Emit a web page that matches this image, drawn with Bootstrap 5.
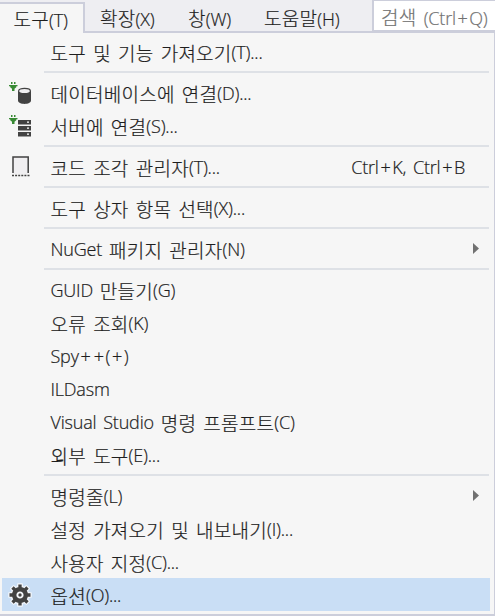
<!DOCTYPE html>
<html lang="ko">
<head>
<meta charset="utf-8">
<meta name="viewport" content="width=device-width, initial-scale=1">
<title>도구 메뉴</title>
<link href="https://cdn.jsdelivr.net/npm/bootstrap@5.3.0/dist/css/bootstrap.min.css" rel="stylesheet">
<style>
body{width:497px;height:616px;overflow:hidden;background:#fff;color:#1e1e1e;font-family:"Noto Sans CJK KR",sans-serif;font-size:19px;font-weight:300;line-height:33px;white-space:nowrap;-webkit-text-stroke:.22px}
.shell{width:495px}
.topbar{height:33px;background:#eeeef2;border-bottom:2px solid #cccedb}
.tab-open{width:85px;height:31px;margin-top:2px;background:#f6f6f6;border:solid #cccedb;border-width:2px 2px 0 0;padding-left:13.5px;line-height:29px}
.topbar .tab-open{height:31px}
.top-item{padding-top:2px;padding-left:15px;line-height:31px}
.top-item.extend{width:88px}
.top-item.windows{width:76px}
.top-item.help{width:123px}
.search-box{width:123px;height:31px;background:#fff;border:solid #cccedb;border-width:1px 0 1px 2px;color:#717171;padding-left:7px;line-height:31px}
.tool-menu{height:583px;background:#f6f6f6;border-right:1px solid #cccedb;border-bottom:2px solid #cccedb;padding-top:2px}
.tool-menu .entry{height:33px;margin:0 4px 0 2px;padding-left:48.5px;position:relative;line-height:35px}
.entry.active-row{background:#c9def5}
.rule{height:2px;margin:3px 5px 3px 44px;background:#dee1e6}
.en{font-family:"Open Sans","Noto Sans",sans-serif;font-size:18px;letter-spacing:-.2px;word-spacing:2.4px}
.ko{letter-spacing:.25px;word-spacing:1.6px}
.plus{padding:0 1.7px}
.entry svg{position:absolute;left:7px;top:4px}
.entry svg.gear{left:5px}
.entry svg.arrow{left:470px;top:11px}
.shortcut{margin-left:auto;margin-right:25px}
.tab-joint{width:83px;height:2px;margin-top:-2px;background:#f6f6f6;position:relative}
</style>
<script src="https://cdn.jsdelivr.net/npm/bootstrap@5.3.0/dist/js/bootstrap.bundle.min.js"></script>
</head>
<body>
<div class="shell">
<nav class="topbar d-flex">
<div class="tab-open"><span class="ko">도구</span><span class="en">(T)</span></div>
<div class="top-item extend"><span class="ko">확장</span><span class="en">(X)</span></div>
<div class="top-item windows"><span class="ko">창</span><span class="en">(W)</span></div>
<div class="top-item help"><span class="ko">도움말</span><span class="en">(H)</span></div>
<div class="search-box"><span class="ko">검색 </span><span class="en">(Ctrl<span class="plus">+</span>Q)</span></div>
</nav>
<div class="tab-joint"></div>
<main class="tool-menu">
<div class="entry d-flex"><span class="ko">도구 및 기능 가져오기</span><span class="en">(T)...</span></div>
<div class="rule"></div>
<div class="entry d-flex">
<svg width="26" height="26"><path d="M2 2h1.500v2H2zM5 2h1.500v2H5zM0 5h8.500v1.300H7.300v1L5.500 8.800V11H3V8.800L1.200 7.300v-1H0z" fill="#388a34"/><path d="M9 11v9.500c0 4.500 13 4.500 13 0V11z" fill="#424242"/><ellipse cx="15.500" cy="11" rx="5.900" ry="2.700" fill="#f0eff1" stroke="#424242" stroke-width="1.200"/></svg>
<span class="ko">데이터베이스에 연결</span><span class="en">(D)...</span></div>
<div class="entry d-flex">
<svg width="26" height="26"><path d="M2 2h1.500v2H2zM5 2h1.500v2H5zM0 5h8.500v1.300H7.300v1L5.500 8.800V11H3V8.800L1.200 7.300v-1H0z" fill="#388a34"/><path d="M9 7h13v4.500H9zM9 13h13v4.500H9zM9 19h13v4.500H9z" fill="#424242"/><path d="M18 8.500h2v1.200h-2zM18 14.500h2v1.200h-2zM18 20.500h2v1.200h-2z" fill="#fff"/></svg>
<span class="ko">서버에 연결</span><span class="en">(S)...</span></div>
<div class="rule"></div>
<div class="entry d-flex">
<svg width="26" height="26"><path d="M4 3h15v17H4z" fill="#f0eff1"/><path d="M4 19V3h15.200v16" fill="none" stroke="#424242" stroke-width="1.500"/><path d="M3 21.500h18" stroke="#424242" stroke-width="1.700" stroke-dasharray="2 1.100"/></svg>
<span class="ko">코드 조각 관리자</span><span class="en">(T)...</span><span class="en shortcut">Ctrl<span class="plus">+</span>K, Ctrl<span class="plus">+</span>B</span></div>
<div class="rule"></div>
<div class="entry d-flex"><span class="ko">도구 상자 항목 선택</span><span class="en">(X)...</span></div>
<div class="rule"></div>
<div class="entry d-flex"><span class="en">NuGet&nbsp;</span><span class="ko">패키지 관리자</span><span class="en">(N)</span><svg class="arrow" width="8" height="12"><path d="M1 0l6 5.500L1 11z" fill="#717171"/></svg></div>
<div class="rule"></div>
<div class="entry d-flex"><span class="en">GUID&nbsp;</span><span class="ko">만들기</span><span class="en">(G)</span></div>
<div class="entry d-flex"><span class="ko">오류 조회</span><span class="en">(K)</span></div>
<div class="entry d-flex"><span class="en">Spy<span class="plus">+</span><span class="plus">+</span>(<span class="plus">+</span>)</span></div>
<div class="entry d-flex"><span class="en">ILDasm</span></div>
<div class="entry d-flex"><span class="en">Visual Studio&nbsp;</span><span class="ko">명령 프롬프트</span><span class="en">(C)</span></div>
<div class="entry d-flex"><span class="ko">외부 도구</span><span class="en">(E)...</span></div>
<div class="rule"></div>
<div class="entry d-flex"><span class="ko">명령줄</span><span class="en">(L)</span><svg class="arrow" width="8" height="12"><path d="M1 0l6 5.500L1 11z" fill="#717171"/></svg></div>
<div class="entry d-flex"><span class="ko">설정 가져오기 및 내보내기</span><span class="en">(I)...</span></div>
<div class="entry d-flex"><span class="ko">사용자 지정</span><span class="en">(C)...</span></div>
<div class="entry active-row d-flex">
<svg class="gear" width="26" height="26" viewBox="-13 -13 26 26"><g stroke="#f4f7fb" stroke-width="2.500" fill="#f4f7fb"><circle r="8"/><path id="teeth" d="M-2-7.500L-1.500-10.500h3L2-7.500M-2 7.500L-1.500 10.500h3L2 7.500M-7.500-2L-10.500-1.500v3L-7.500 2M7.500-2L10.500-1.500v3L7.500 2"/><use href="#teeth" transform="rotate(45)"/></g><g fill="none" stroke="#424242"><circle r="5.800" stroke-width="4.400"/><path d="M0-7v-3.500M0 7v3.500M-7 0h-3.500M7 0h3.500M-5-5l-2.500-2.500M5-5l2.500-2.500M-5 5l-2.500 2.500M5 5l2.500 2.500" stroke-width="3.300"/></g><circle r="1.700" fill="#424242"/></svg>
<span class="ko">옵션</span><span class="en">(O)...</span></div>
</main>
</div>
</body>
</html>
